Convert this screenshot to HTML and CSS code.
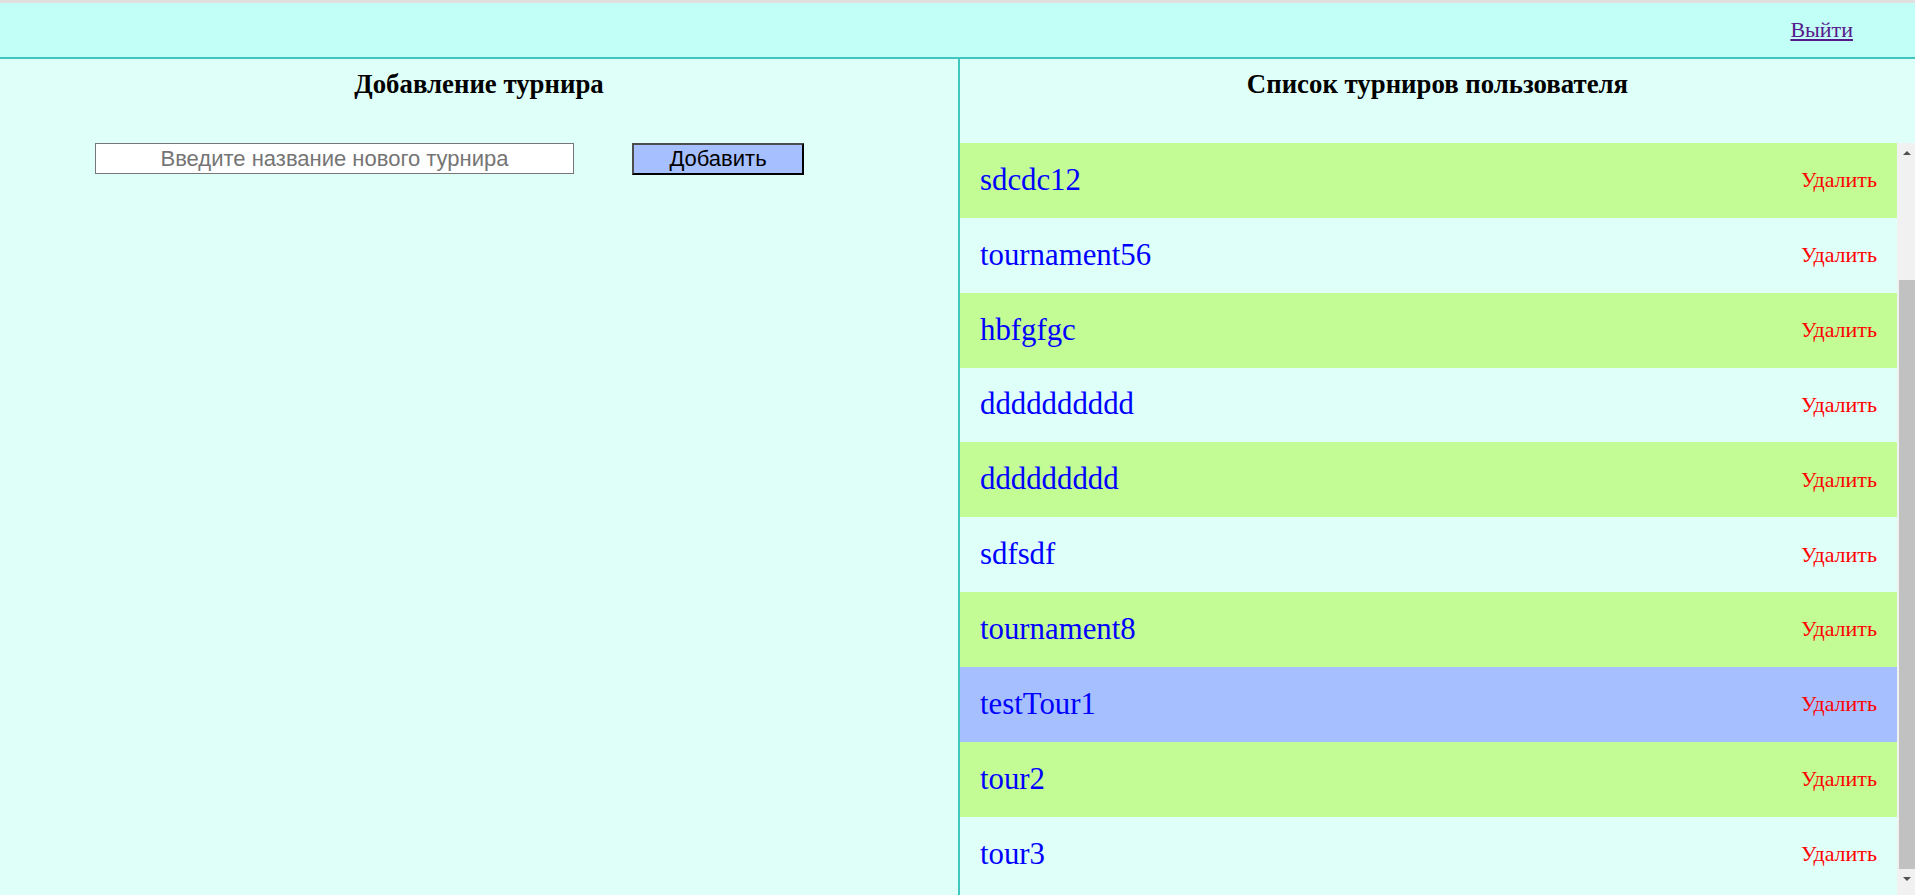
FILE: index.html
```html
<!DOCTYPE html>
<html lang="ru">
<head>
<meta charset="utf-8">
<title>Турниры</title>
<link rel="stylesheet" href="styles.css">
</head>
<body>
<header class="topbar">
  <a class="logout" href="#">Выйти</a>
</header>
<main class="layout">
  <section class="panel panel-add">
    <h2 class="panel-title">Добавление турнира</h2>
    <form class="add-form">
      <input class="add-input" type="text" placeholder="Введите название нового турнира">
      <button class="add-button" type="button">Добавить</button>
    </form>
  </section>
  <section class="panel panel-list">
    <h2 class="panel-title">Список турниров пользователя</h2>
    <div class="list-wrap">
      <div class="list">
        <div class="row row-green"><span class="row-name">sdcdc12</span><span class="row-delete">Удалить</span></div>
        <div class="row row-light"><span class="row-name">tournament56</span><span class="row-delete">Удалить</span></div>
        <div class="row row-green"><span class="row-name">hbfgfgc</span><span class="row-delete">Удалить</span></div>
        <div class="row row-light"><span class="row-name">dddddddddd</span><span class="row-delete">Удалить</span></div>
        <div class="row row-green"><span class="row-name">ddddddddd</span><span class="row-delete">Удалить</span></div>
        <div class="row row-light"><span class="row-name">sdfsdf</span><span class="row-delete">Удалить</span></div>
        <div class="row row-green"><span class="row-name">tournament8</span><span class="row-delete">Удалить</span></div>
        <div class="row row-active"><span class="row-name">testTour1</span><span class="row-delete">Удалить</span></div>
        <div class="row row-green"><span class="row-name">tour2</span><span class="row-delete">Удалить</span></div>
        <div class="row row-light"><span class="row-name">tour3</span><span class="row-delete">Удалить</span></div>
      </div>
      <div class="scrollbar" aria-hidden="true">
        <div class="sb-btn sb-up"><span class="arrow-up"></span></div>
        <div class="sb-track"><div class="sb-thumb"></div></div>
        <div class="sb-btn sb-down"><span class="arrow-down"></span></div>
      </div>
    </div>
  </section>
</main>
</body>
</html>
```

FILE: styles.css
```css
html, body {
  margin: 0;
  padding: 0;
  height: 100%;
}

body {
  font-family: "Liberation Serif", "Times New Roman", serif;
  background: #dffff9;
  overflow: hidden;
}

.topbar {
  box-sizing: border-box;
  height: 59px;
  border-top: 3px solid #e0e0e0;
  border-bottom: 2px solid #40c6bf;
  background: #c2fff6;
  display: flex;
  align-items: center;
  justify-content: flex-end;
  padding-right: 62px;
}

.logout {
  font-size: 22px;
  color: #551a8b;
  text-decoration: underline;
}

.layout {
  display: grid;
  grid-template-columns: 960px 1fr;
  height: calc(100vh - 59px);
}

.panel {
  display: flex;
  flex-direction: column;
  min-height: 0;
  box-sizing: border-box;
}

.panel-add {
  border-right: 2px solid #40c6bf;
}

.panel-title {
  margin: 10px 0 44px;
  font-size: 26.8px;
  line-height: 30px;
  font-weight: bold;
  text-align: center;
  color: #000;
}

.add-form {
  display: flex;
  align-items: flex-start;
  gap: 58px;
  padding-left: 95px;
  margin: 0;
}

.add-input {
  box-sizing: border-box;
  width: 479px;
  height: 31px;
  border: 1px solid #767676;
  border-radius: 0;
  background: #fff;
  padding: 0 4px;
  font-family: "Liberation Sans", Arial, sans-serif;
  font-size: 22px;
  text-align: center;
  color: #000;
  outline: none;
}

.add-input::placeholder {
  color: #757575;
}

.add-button {
  box-sizing: border-box;
  width: 172px;
  height: 32px;
  padding: 0;
  background: #a6bfff;
  border: 2px solid;
  border-color: #4d4d4d #000 #000 #4d4d4d;
  font-family: "Liberation Sans", Arial, sans-serif;
  font-size: 22px;
  color: #000;
}

.list-wrap {
  flex: 1;
  min-height: 0;
  display: flex;
}

.list {
  flex: 1;
  min-width: 0;
  overflow: hidden;
}

.scrollbar {
  width: 18px;
  flex: none;
  background: #f1f1f1;
  display: flex;
  flex-direction: column;
}

.sb-btn {
  display: flex;
  justify-content: center;
  padding-left: 2px;
}

.sb-up {
  height: 17px;
  align-items: flex-start;
  padding-top: 8px;
  box-sizing: border-box;
}

.sb-down {
  height: 26px;
  align-items: flex-start;
  padding-top: 8px;
  box-sizing: border-box;
}

.arrow-up {
  width: 0;
  height: 0;
  border-left: 4px solid transparent;
  border-right: 4px solid transparent;
  border-bottom: 4px solid #505050;
}

.arrow-down {
  width: 0;
  height: 0;
  border-left: 4px solid transparent;
  border-right: 4px solid transparent;
  border-top: 4px solid #505050;
}

.sb-track {
  flex: 1;
  display: flex;
  flex-direction: column;
  justify-content: flex-end;
}

.sb-thumb {
  height: 589px;
  margin-left: 2px;
  background: #c1c1c1;
}

.row {
  box-sizing: border-box;
  height: 74.85px;
  padding: 0 20px;
  display: flex;
  align-items: center;
  justify-content: space-between;
}

.row-green {
  background: #c3fc95;
}

.row-light {
  background: #dffff9;
}

.row-active {
  background: #a6c0ff;
}

.row-name {
  font-size: 30.8px;
  color: #0000ff;
}

.row-delete {
  font-size: 22px;
  color: #ff0000;
}
```
